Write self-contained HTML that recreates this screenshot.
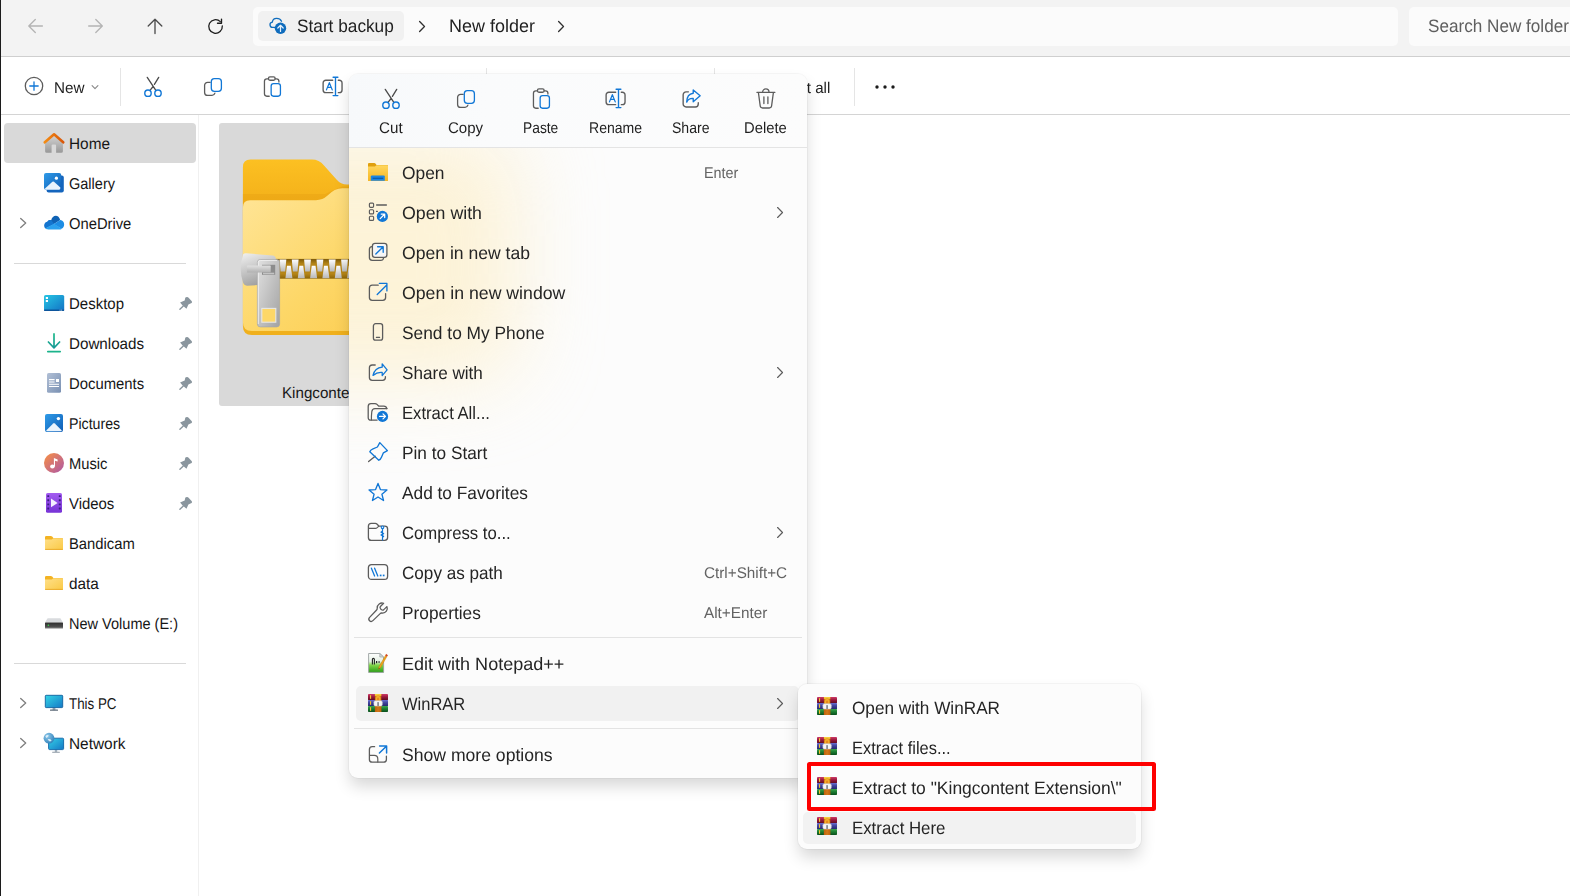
<!DOCTYPE html><html lang="en"><head><meta charset="utf-8"><title>File Explorer</title><style>
*{box-sizing:border-box;margin:0;padding:0}
html,body{width:1570px;height:896px;overflow:hidden;background:#fff}
body{font-family:"Liberation Sans",sans-serif;position:relative;text-rendering:geometricPrecision}
.abs,.t,svg{position:absolute}
.t{white-space:nowrap;line-height:1;transform-origin:0 50%;letter-spacing:0}
.layer{position:absolute;left:0;top:0;width:1570px;height:896px}
.gs{will-change:transform}
#topbar{left:0;top:0;width:1570px;height:56px;background:#f3f3f3}
#topline{left:0;top:56px;width:1570px;height:1px;background:#cfcfcf}
#toolbar{left:0;top:57px;width:1570px;height:57px;background:#fff}
#toolline{left:0;top:114px;width:1570px;height:1px;background:#d4d4d4}
#leftedge{left:0;top:0;width:1.25px;height:896px;background:#1c1c1c}
#addr{left:253px;top:6.5px;width:1145px;height:39.5px;background:#fbfbfb;border-radius:5px}
#chip{left:257.5px;top:10.5px;width:146.5px;height:30.5px;background:#f1f1f1;border-radius:5px}
#search{left:1409px;top:6.5px;width:200px;height:39.5px;background:#fbfbfb;border-radius:5px}
.vsep{width:1px;background:#e5e5e5}
#navline{left:198px;top:115px;width:1px;height:781px;background:#f0f0f0}
#homehl{left:4px;top:123px;width:192px;height:39.5px;background:#d9d9d9;border-radius:4px}
.hsep{height:1px;background:#d9d9d9}
#tile{left:219px;top:123px;width:214px;height:283px;background:#d9d9d9;border-radius:3px}
#menu{left:348.9px;top:74px;width:458.4px;height:704.3px;border-radius:9px;
  background:#fcfcfc;box-shadow:0 0 0 1px rgba(0,0,0,.035),0 9px 16px -1px rgba(0,0,0,.16)}
#menutop{left:0;top:0;width:460px;height:73px;background:linear-gradient(90deg,#f7f9fb 0%,#fafbfc 30%,#fcfcfc 100%)}
#menutopline{left:0;top:73px;width:460px;height:1px;background:#e4e4e4}
#tint{left:-140px;top:58px;width:308px;height:248px;background:#fdeab6;opacity:.52;filter:blur(42px);border-radius:40px}
.msep{height:1px;background:#e3e3e3;left:353.5px;width:448.5px}
#winrarhl{left:356px;top:686px;width:443px;height:34.5px;background:#f1f1f1;border-radius:5px}
#sub{left:798px;top:684px;width:343px;height:164.5px;border-radius:9px;background:#fcfcfc;
  box-shadow:0 0 0 1px rgba(0,0,0,.04),0 9px 16px -1px rgba(0,0,0,.16)}
#herehl{left:803px;top:811.5px;width:333.2px;height:32.2px;background:#f2f2f2;border-radius:5px}
#redbox{left:806.6px;top:762.1px;width:349px;height:49.1px;border:4.2px solid #fe0000;border-radius:2.5px}
</style></head><body>
<svg style="position:absolute;left:0;top:0" width="0" height="0"><defs><linearGradient id="wr1" x1="0" y1="0" x2="0" y2="1"><stop offset="0" stop-color="#cf3a68"/><stop offset=".45" stop-color="#9c1a3e"/><stop offset="1" stop-color="#5e0a20"/></linearGradient><linearGradient id="wr2" x1="0" y1="0" x2="0" y2="1"><stop offset="0" stop-color="#6a6fd2"/><stop offset=".45" stop-color="#40449c"/><stop offset="1" stop-color="#26286c"/></linearGradient><linearGradient id="wr3" x1="0" y1="0" x2="0" y2="1"><stop offset="0" stop-color="#3aa84e"/><stop offset=".45" stop-color="#1c7e32"/><stop offset="1" stop-color="#0a4e1c"/></linearGradient><linearGradient id="wrb" x1="0" y1="0" x2="1" y2="0"><stop offset="0" stop-color="#c8680c"/><stop offset=".5" stop-color="#f09a22"/><stop offset="1" stop-color="#c8680c"/></linearGradient><linearGradient id="fg" x1="0" y1="0" x2="1" y2="1"><stop offset="0" stop-color="#ffe08a"/><stop offset="1" stop-color="#fac945"/></linearGradient></defs></svg>
<div class="layer" id="L0">
<div id="topbar" class="abs"></div>
<div id="topline" class="abs"></div>
<div id="toolbar" class="abs"></div>
<div id="toolline" class="abs"></div>
<div id="addr" class="abs"></div>
<div id="chip" class="abs"></div>
<div id="search" class="abs"></div>
<div class="abs vsep" style="left:120px;top:68px;height:38px"></div>
<div class="abs vsep" style="left:486px;top:68px;height:38px"></div>
<div class="abs vsep" style="left:714px;top:68px;height:38px"></div>
<div class="abs vsep" style="left:854px;top:68px;height:38px"></div>
<div id="navline" class="abs"></div>
<div id="homehl" class="abs"></div>
<div class="abs hsep" style="left:14px;top:263px;width:172px"></div>
<div class="abs hsep" style="left:14px;top:663px;width:172px"></div>
<div id="tile" class="abs"></div>
<div id="leftedge" class="abs"></div>
<svg style="position:absolute;left:230px;top:150px" width="190" height="190" viewBox="0 0 190 190" fill="none" ><defs><linearGradient id="zb" x1="0" y1="0" x2="0" y2="1"><stop offset="0" stop-color="#fcc022"/><stop offset="1" stop-color="#f0aa16"/></linearGradient><linearGradient id="zf" x1="0" y1="0" x2="1" y2="1"><stop offset="0" stop-color="#ffe598"/><stop offset=".55" stop-color="#fdd768"/><stop offset="1" stop-color="#fccb4c"/></linearGradient><linearGradient id="zt" x1="0" y1="0" x2="0" y2="1"><stop offset="0" stop-color="#ffffff"/><stop offset="1" stop-color="#b8b8b8"/></linearGradient><linearGradient id="zk" x1="0" y1="0" x2="0" y2="1"><stop offset="0" stop-color="#7d5a08"/><stop offset=".25" stop-color="#b58517"/><stop offset=".75" stop-color="#b58517"/><stop offset="1" stop-color="#8a6409"/></linearGradient><linearGradient id="zs" x1="0.2" y1="0" x2="0.6" y2="1"><stop offset="0" stop-color="#ececec"/><stop offset="1" stop-color="#9a9a9a"/></linearGradient><linearGradient id="zp" x1="0" y1="0" x2="1" y2="1"><stop offset="0" stop-color="#e2e2e2"/><stop offset=".5" stop-color="#c2c2c2"/><stop offset="1" stop-color="#a2a2a2"/></linearGradient><linearGradient id="zbar" x1="0" y1="0" x2="0" y2="1"><stop offset="0" stop-color="#e0e0e0"/><stop offset="1" stop-color="#b0b0b0"/></linearGradient></defs><path d="M12.9 17.2 Q12.9 9.6 20.4 9.6 H82 Q89 9.6 94 15.4 L106.5 29.6 Q110.8 34.6 117 34.6 H182 V70 H12.9 Z" fill="url(#zb)"/><path d="M12.9 44 H95 L112 36.5 H182 V60 H12.9 Z" fill="#e9a414" opacity=".55"/><path d="M12.9 60 H182 V185 H21.9 Q12.9 185 12.9 176 Z" fill="#f0b01c"/><path d="M12.9 57.4 Q12.9 50.2 20.2 50.2 H86 Q92.6 50.2 97.6 45.6 Q104.4 38.2 112.4 38.2 H182 V181 H21.9 Q12.9 181 12.9 172 Z" fill="url(#zf)"/><rect x="40" y="108.9" width="142" height="19.8" fill="url(#zk)"/><path d="M49.5 109.4 H56.3 L55.2 121.6 H50.6 Z" fill="url(#zt)"/><path d="M61.8 109.4 H68.6 L67.5 121.6 H62.9 Z" fill="url(#zt)"/><path d="M74.1 109.4 H80.9 L79.8 121.6 H75.2 Z" fill="url(#zt)"/><path d="M86.5 109.4 H93.3 L92.2 121.6 H87.6 Z" fill="url(#zt)"/><path d="M98.8 109.4 H105.6 L104.5 121.6 H99.9 Z" fill="url(#zt)"/><path d="M111.1 109.4 H117.9 L116.8 121.6 H112.2 Z" fill="url(#zt)"/><path d="M123.4 109.4 H130.2 L129.1 121.6 H124.5 Z" fill="url(#zt)"/><path d="M135.7 109.4 H142.5 L141.4 121.6 H136.8 Z" fill="url(#zt)"/><path d="M148.0 109.4 H154.8 L153.7 121.6 H149.1 Z" fill="url(#zt)"/><path d="M160.3 109.4 H167.1 L166.0 121.6 H161.4 Z" fill="url(#zt)"/><path d="M57.0 115.8 H60.8 L62.4 128.2 H55.4 Z" fill="url(#zt)"/><path d="M69.4 115.8 H73.2 L74.8 128.2 H67.8 Z" fill="url(#zt)"/><path d="M81.7 115.8 H85.5 L87.1 128.2 H80.1 Z" fill="url(#zt)"/><path d="M94.0 115.8 H97.8 L99.4 128.2 H92.4 Z" fill="url(#zt)"/><path d="M106.4 115.8 H110.2 L111.8 128.2 H104.8 Z" fill="url(#zt)"/><path d="M118.7 115.8 H122.5 L124.1 128.2 H117.1 Z" fill="url(#zt)"/><path d="M131.0 115.8 H134.8 L136.4 128.2 H129.4 Z" fill="url(#zt)"/><path d="M143.3 115.8 H147.1 L148.7 128.2 H141.7 Z" fill="url(#zt)"/><path d="M155.6 115.8 H159.4 L161.0 128.2 H154.0 Z" fill="url(#zt)"/><path d="M167.9 115.8 H171.7 L173.3 128.2 H166.3 Z" fill="url(#zt)"/><path d="M13.2 104.2 Q14 103.2 16 103.3 L42.6 105.4 Q45.6 105.8 45.8 108.6 V131 Q45.8 133.6 42.6 133.9 L17.2 135.8 Q14.4 135.9 13.2 133 Q8.2 119 13.2 104.2 Z" fill="url(#zs)"/><rect x="27.4" y="109.5" width="22.2" height="67.4" rx="2.8" fill="url(#zp)" stroke="#a6a6a6" stroke-width=".7"/><path d="M28.3 174 V112.4 Q28.3 110.4 30.4 110.4 H47" stroke="#f2f2f2" stroke-width="1" fill="none" opacity=".85"/><rect x="31.8" y="158.4" width="14" height="13.8" fill="#fdd768" stroke="#e6e6e6" stroke-width="1.1"/><rect x="32" y="114.8" width="13.2" height="10" fill="#8c8c8c"/><rect x="33" y="122.7" width="11.2" height="1.6" fill="#c4c4c4"/><rect x="16.9" y="115.6" width="23.8" height="7" rx=".6" fill="url(#zbar)"/></svg>
<svg style="position:absolute;left:26.299999999999997px;top:17px" width="18" height="18" viewBox="0 0 18 18" fill="none" ><path d="M16.4 9 H2.9 M9.3 2.5 L2.8 9 L9.3 15.5" stroke="#b4b4b4" stroke-width="1.35" stroke-linecap="round" stroke-linejoin="round"/></svg>
<svg style="position:absolute;left:86.5px;top:17px" width="18" height="18" viewBox="0 0 18 18" fill="none" ><path d="M1.7 9 H15.2 M8.8 2.5 L15.3 9 L8.8 15.5" stroke="#b4b4b4" stroke-width="1.35" stroke-linecap="round" stroke-linejoin="round"/></svg>
<svg style="position:absolute;left:146px;top:17.2px" width="18" height="18" viewBox="0 0 18 18" fill="none" ><path d="M9 16.6 V2.2 M2.2 9 L9 2.2 L15.8 9" stroke="#4d4d4d" stroke-width="1.35" stroke-linecap="round" stroke-linejoin="round"/></svg>
<svg style="position:absolute;left:203.0px;top:14.0px" width="25" height="25" viewBox="0 0 25 25" fill="none" ><path d="M19.3 11.9 A6.8 6.8 0 1 1 17.3 7.65" stroke="#1c1c1c" stroke-width="1.3" stroke-linecap="round"/><path d="M18.5 5.1 V9.25 H14.5" stroke="#1c1c1c" stroke-width="1.35" stroke-linecap="round" stroke-linejoin="round"/></svg>
<svg style="position:absolute;left:267.6px;top:15.3px" width="20" height="20" viewBox="0 0 20 20" fill="none" ><path d="M11.9 10.2 H9.2 C6.2 10.3 5.2 5.6 8.8 4.9 C9.6 -0.2 16.2 0.4 18 4.0" stroke="#0f6cbd" stroke-width="1.3" stroke-linecap="round" transform="translate(-4.5,2.2)"/><circle cx="12.5" cy="13.2" r="5.7" fill="#0f6cbd"/><path d="M12.5 16.4 V10.6 M9.8 13.0 L12.5 10.3 L15.2 13.0" stroke="#e6f0fa" stroke-width="1.25" stroke-linecap="round" stroke-linejoin="round"/></svg>
<svg style="position:absolute;left:415.7px;top:18.4px" width="12" height="17" viewBox="0 0 12 17" fill="none" ><path d="M3.6 3.5 L8.5 8.5 L3.6 13.5" stroke="#303030" stroke-width="1.3" stroke-linecap="round" stroke-linejoin="round"/></svg>
<svg style="position:absolute;left:554.7px;top:18.4px" width="12" height="17" viewBox="0 0 12 17" fill="none" ><path d="M3.6 3.5 L8.5 8.5 L3.6 13.5" stroke="#303030" stroke-width="1.3" stroke-linecap="round" stroke-linejoin="round"/></svg>
<svg style="position:absolute;left:22.5px;top:75.4px" width="22" height="22" viewBox="0 0 22 22" fill="none" ><circle cx="11" cy="11" r="8.7" stroke="#5c5c5c" stroke-width="1.3"/><path d="M11 6.8 V15.2 M6.8 11 H15.2" stroke="#1177d6" stroke-width="1.3" stroke-linecap="round"/></svg>
<svg style="position:absolute;left:89px;top:81.3px" width="12" height="12" viewBox="0 0 12 12" fill="none" ><path d="M3.1 4.7 L6 7.6 L8.9 4.7" stroke="#8a8a8a" stroke-width="1.15" stroke-linecap="round" stroke-linejoin="round"/></svg>
<svg style="position:absolute;left:140.4px;top:73px" width="26" height="26" viewBox="0 0 26 26" fill="none" ><path d="M7.25 4.35 L15.67 17.1 M18.7 4.35 L14.4 11.4 M13.1 13.5 L10.2 17.1" stroke="#4a4a4a" stroke-width="1.3" stroke-linecap="round"/><circle cx="7.98" cy="20.17" r="3.2" stroke="#1177d6" stroke-width="1.4"/><circle cx="17.99" cy="20.17" r="3.2" stroke="#1177d6" stroke-width="1.4"/></svg>
<svg style="position:absolute;left:202px;top:76px" width="22" height="22" viewBox="0 0 22 22" fill="none" ><path d="M8.2 6.3 H5.6 A3 3 0 0 0 2.6 9.3 V16.4 A3 3 0 0 0 5.6 19.4 H10 A3 3 0 0 0 12.9 17.2" stroke="#5c5c5c" stroke-width="1.3" stroke-linecap="round"/><rect x="9.3" y="2.7" width="10.1" height="12.6" rx="3" stroke="#1177d6" stroke-width="1.3"/></svg>
<svg style="position:absolute;left:261.21px;top:74.34px" width="22.68" height="25.92" viewBox="0 0 21 24" fill="none"><path d="M7 4.5 H5.4 A2.2 2.2 0 0 0 3.2 6.7 V18.4 A2.2 2.2 0 0 0 5.4 20.6 H7.6 M13 4.5 H14.4 A2.2 2.2 0 0 1 16.6 6.7 V7.4" stroke="#5c5c5c" stroke-width="1.20" stroke-linecap="round"/><rect x="6.9" y="2.6" width="6.2" height="3.2" rx="1.4" stroke="#5c5c5c" stroke-width="1.20"/><rect x="9.4" y="9" width="8.6" height="11.6" rx="2.2" stroke="#1177d6" stroke-width="1.20"/></svg>
<svg style="position:absolute;left:320.02px;top:75.46px" width="24.96" height="22.88" viewBox="0 0 24 22" fill="none"><path d="M12.2 5 H5.6 A2.6 2.6 0 0 0 3 7.6 V14.4 A2.6 2.6 0 0 0 5.6 17 H12.2 M17.6 5 H18.6 A2.6 2.6 0 0 1 21.2 7.6 V14.4 A2.6 2.6 0 0 1 18.6 17 H17.6" stroke="#5c5c5c" stroke-width="1.3" stroke-linecap="round"/><path d="M12.6 2.2 H17.2 M12.6 19.8 H17.2 M14.9 2.2 V19.8" stroke="#1177d6" stroke-width="1.3" stroke-linecap="round"/><path d="M6.2 14.3 L9 7.4 L11.8 14.3 M7.2 12 H10.8" stroke="#1177d6" stroke-width="1.2" stroke-linecap="round" stroke-linejoin="round"/></svg>
<svg style="position:absolute;left:382.75px;top:75.45px" width="23.10" height="23.10" viewBox="0 0 22 22" fill="none"><path d="M8 4.6 H5.8 A2.8 2.8 0 0 0 3 7.4 V16.2 A2.8 2.8 0 0 0 5.8 19 H14.6 A2.8 2.8 0 0 0 17.4 16.2 V15" stroke="#5c5c5c" stroke-width="1.3" stroke-linecap="round"/><path d="M12.6 2.8 L19.2 8.4 L12.6 14 V10.9 C9.6 10.7 7.6 11.9 6.4 14.4 C6.5 9.4 9 6.4 12.6 6 Z" stroke="#1177d6" stroke-width="1.3" stroke-linejoin="round"/></svg>
<svg style="position:absolute;left:443px;top:75px" width="22" height="24" viewBox="0 0 22 24" fill="none" ><path d="M1.9 5.3 H19.9 M7.6 5.1 A3.2 3.2 0 0 1 14 5.1 M3.4 5.5 L5.2 18.8 A2.4 2.4 0 0 0 7.6 21 H14.2 A2.4 2.4 0 0 0 16.6 18.8 L18.4 5.5 M8.9 9.8 V16.5 M12.9 9.8 V16.5" stroke="#5c5c5c" stroke-width="1.3" stroke-linecap="round" stroke-linejoin="round"/></svg>
<svg style="position:absolute;left:874px;top:84px" width="22" height="6" viewBox="0 0 22 6" fill="none" ><circle cx="3" cy="3" r="1.7" fill="#1b1b1b"/><circle cx="11" cy="3" r="1.7" fill="#1b1b1b"/><circle cx="19" cy="3" r="1.7" fill="#1b1b1b"/></svg>
<svg style="position:absolute;left:43px;top:132px" width="22" height="22" viewBox="0 0 22 22" fill="none" ><defs><linearGradient id="hg" x1="0" y1="0" x2="0" y2="1"><stop offset="0" stop-color="#d6d6d6"/><stop offset="1" stop-color="#989898"/></linearGradient><linearGradient id="hr" x1="0" y1="0" x2="1" y2="0"><stop offset="0" stop-color="#f48c14"/><stop offset="1" stop-color="#d9570a"/></linearGradient></defs><path d="M2.1 9.6 L11 2.6 L19.9 9.6 V19.2 Q19.9 20.8 18.3 20.8 H13.1 V13.4 Q13.1 12.4 12.1 12.4 H9.6 Q8.6 12.4 8.6 13.4 V20.8 H3.7 Q2.1 20.8 2.1 19.2 Z" fill="url(#hg)"/><path d="M1.8 10.3 L11.05 2.3 L20.2 10.3" stroke="url(#hr)" stroke-width="2.6" stroke-linecap="round" stroke-linejoin="round"/></svg>
<svg style="position:absolute;left:43px;top:172px" width="22" height="22" viewBox="0 0 22 22" fill="none" ><defs><linearGradient id="gg" x1="0" y1="0" x2="1" y2="1"><stop offset="0" stop-color="#2f9be8"/><stop offset="1" stop-color="#0f5db5"/></linearGradient></defs><rect x="3.6" y="3.6" width="17.2" height="17" rx="2" fill="#1465bd"/><rect x="1" y="1" width="17.2" height="16.8" rx="2" fill="url(#gg)"/><path d="M2 16.6 L9.4 9.8 Q10.2 9.2 11 9.8 L17.4 15.6 Q17.6 17.8 16 17.8 H3.2 Q2 17.8 2 16.6 Z" fill="#e8f3fd"/><circle cx="13.4" cy="6.2" r="1.6" fill="#fff"/></svg>
<svg style="position:absolute;left:43px;top:214.6px" width="22" height="17" viewBox="0 0 22 17" fill="none" ><g transform="translate(0,-1.2) scale(1,1.1)"><path d="M8.2 5.8 C9.4 0.6 15.8 0.2 17.2 5.6 L10.6 9.6 L4.4 7.4 C5 6.2 6.6 5.4 8.2 5.8 Z" fill="#0f62b4"/><path d="M4.4 7.2 C1.2 7.4 0 11.4 2.6 13.4 L11.4 9.2 L8.2 5.8 C6.6 5.3 5 6.0 4.4 7.2 Z" fill="#1475cf"/><path d="M17.2 5.6 C21.4 5.4 22.8 11.6 18.6 13.6 L10.6 9.4 Z" fill="#1e8de4"/><path d="M2.4 13.2 C3.2 14 4.2 14.2 5.2 14.2 H17.4 C17.9 14.2 18.4 14 18.8 13.6 L11 9 Z" fill="#2aa0ee"/></g></svg>
<svg style="position:absolute;left:43px;top:294px" width="22" height="18" viewBox="0 0 22 18" fill="none" ><defs><linearGradient id="dg" x1="0" y1="0" x2="1" y2="1"><stop offset="0" stop-color="#27c6e4"/><stop offset="1" stop-color="#1272c4"/></linearGradient></defs><rect x="1" y="1" width="20.2" height="15.9" rx="1.6" fill="url(#dg)"/><rect x="1" y="15.6" width="20.2" height="1.3" rx=".6" fill="#0d559c"/><rect x="2.8" y="3" width="2.2" height="2" fill="#fff"/><rect x="2.8" y="6" width="2.2" height="2" fill="#fff"/><rect x="16.6" y="15.7" width=".9" height=".9" fill="#cfe6f7"/><rect x="18.2" y="15.7" width=".9" height=".9" fill="#cfe6f7"/></svg>
<svg style="position:absolute;left:46px;top:332px" width="16" height="22" viewBox="0 0 16 22" fill="none" ><defs><linearGradient id="dlg" x1="0" y1="0" x2="0" y2="1"><stop offset="0" stop-color="#1cb88a"/><stop offset="1" stop-color="#179a96"/></linearGradient></defs><path d="M8 1.9 V15.4 M2.4 10 L8 15.8 L13.6 10" stroke="url(#dlg)" stroke-width="1.7" stroke-linecap="round" stroke-linejoin="round"/><path d="M1.8 19.6 H14.2" stroke="#1bb38b" stroke-width="1.7" stroke-linecap="round"/></svg>
<svg style="position:absolute;left:46px;top:372px" width="16" height="22" viewBox="0 0 16 22" fill="none" ><defs><linearGradient id="dcg" x1="0" y1="0" x2="1" y2="1"><stop offset="0" stop-color="#b2c0d6"/><stop offset="1" stop-color="#7990b2"/></linearGradient></defs><rect x="1" y="1" width="14" height="19.8" rx="1.6" fill="url(#dcg)"/><rect x="10" y="7" width="3" height="3" fill="#fff"/><path d="M3 7.6 H8.6 M3 9.9 H8.6 M3 12.2 H13 M3 14.5 H13" stroke="#fff" stroke-width="1.05"/></svg>
<svg style="position:absolute;left:43.9px;top:413px" width="20" height="20" viewBox="0 0 20 20" fill="none" ><defs><linearGradient id="pg" x1="0" y1="0" x2="1" y2="1"><stop offset="0" stop-color="#2f9be8"/><stop offset="1" stop-color="#0f5db5"/></linearGradient></defs><rect x="1" y="1" width="18" height="18" rx="2" fill="url(#pg)"/><path d="M2.2 17.4 L9.2 10.4 Q10 9.7 10.8 10.4 L17.8 17.4 Q17.6 18.2 16.6 18.2 H3.4 Q2.4 18.2 2.2 17.4 Z" fill="#eaf4fd"/><circle cx="14.4" cy="5.6" r="1.7" fill="#fff"/></svg>
<svg style="position:absolute;left:43px;top:452px" width="22" height="22" viewBox="0 0 22 22" fill="none" ><defs><linearGradient id="mg" x1="0.1" y1="0.1" x2="0.9" y2="0.9"><stop offset="0" stop-color="#f18b4c"/><stop offset="1" stop-color="#b45c9e"/></linearGradient></defs><circle cx="11" cy="11" r="10" fill="url(#mg)"/><ellipse cx="9.4" cy="14.6" rx="2.3" ry="2" fill="#fff"/><path d="M10.9 14.6 V6 L14.6 7.4 V9.6 L12 8.7 V14.6 Z" fill="#fff"/></svg>
<svg style="position:absolute;left:45px;top:492px" width="18" height="22" viewBox="0 0 18 22" fill="none" ><defs><linearGradient id="vg" x1="0" y1="0" x2="0" y2="1"><stop offset="0" stop-color="#a35cf0"/><stop offset="1" stop-color="#7632d6"/></linearGradient></defs><rect x="1" y="1" width="16" height="19.8" rx="1.6" fill="url(#vg)"/><rect x="2.3" y="3.2" width="1.9" height="1.9" rx=".3" fill="#3c1d80"/><rect x="13.8" y="3.2" width="1.9" height="1.9" rx=".3" fill="#3c1d80"/><rect x="2.3" y="7.3" width="1.9" height="1.9" rx=".3" fill="#3c1d80"/><rect x="13.8" y="7.3" width="1.9" height="1.9" rx=".3" fill="#3c1d80"/><rect x="2.3" y="11.4" width="1.9" height="1.9" rx=".3" fill="#3c1d80"/><rect x="13.8" y="11.4" width="1.9" height="1.9" rx=".3" fill="#3c1d80"/><rect x="2.3" y="15.5" width="1.9" height="1.9" rx=".3" fill="#3c1d80"/><rect x="13.8" y="15.5" width="1.9" height="1.9" rx=".3" fill="#3c1d80"/><path d="M6 6.6 L12.6 10.9 L6 15.2 Z" fill="#f4efff"/></svg>
<svg style="position:absolute;left:43.9px;top:535px" width="20" height="16" viewBox="0 0 20 16" fill="none" ><path d="M1 2.2 Q1 1 2.2 1 H6.8 Q7.6 1 8.2 1.6 L9.4 3 H17.8 Q19 3 19 4.2 V13.8 Q19 15 17.8 15 H2.2 Q1 15 1 13.8 Z" fill="#f3b323"/><path d="M1 4.6 H7 Q7.8 4.6 8.4 4.1 L9.4 3.2 H17.8 Q19 3.2 19 4.4 V13.8 Q19 15 17.8 15 H2.2 Q1 15 1 13.8 Z" fill="url(#fg)"/><path d="M1.3 14.4 H18.7" stroke="#eaa828" stroke-width=".9"/></svg>
<svg style="position:absolute;left:43.9px;top:575px" width="20" height="16" viewBox="0 0 20 16" fill="none" ><path d="M1 2.2 Q1 1 2.2 1 H6.8 Q7.6 1 8.2 1.6 L9.4 3 H17.8 Q19 3 19 4.2 V13.8 Q19 15 17.8 15 H2.2 Q1 15 1 13.8 Z" fill="#f3b323"/><path d="M1 4.6 H7 Q7.8 4.6 8.4 4.1 L9.4 3.2 H17.8 Q19 3.2 19 4.4 V13.8 Q19 15 17.8 15 H2.2 Q1 15 1 13.8 Z" fill="url(#fg)"/><path d="M1.3 14.4 H18.7" stroke="#eaa828" stroke-width=".9"/></svg>
<svg style="position:absolute;left:43.9px;top:616.6px" width="20" height="13" viewBox="0 0 20 13" fill="none" ><defs><linearGradient id="drg" x1="0" y1="0" x2="0" y2="1"><stop offset="0" stop-color="#2e2e2e"/><stop offset="1" stop-color="#5a5a5a"/></linearGradient></defs><path d="M3.6 1.2 H16.4 L19 5.6 H1 Z" fill="#d9dbde"/><rect x="1" y="5.4" width="18" height="5.9" rx=".6" fill="url(#drg)"/><rect x="1" y="10.7" width="18" height=".7" fill="#9a9a9a"/><circle cx="4.4" cy="8.3" r=".75" fill="#36e04a"/></svg>
<svg style="position:absolute;left:44px;top:694px" width="20" height="18" viewBox="0 0 20 18" fill="none" ><defs><linearGradient id="tg" x1="0" y1="0" x2="1" y2="1"><stop offset="0" stop-color="#35d6e6"/><stop offset="1" stop-color="#1478c6"/></linearGradient></defs><rect x="8.6" y="13.2" width="2.8" height="3" fill="#9aa6b2"/><rect x="6" y="15.6" width="8" height="1.1" rx=".3" fill="#5d6b78"/><rect x="1.3" y="1.3" width="17.4" height="12.3" rx=".8" fill="url(#tg)" stroke="#0e5f9e" stroke-width=".9"/></svg>
<svg style="position:absolute;left:42.1px;top:732.2px" width="23" height="22" viewBox="0 0 23 22" fill="none" ><defs><linearGradient id="ng" x1="0" y1="0" x2="1" y2="1"><stop offset="0" stop-color="#35d0e6"/><stop offset="1" stop-color="#1478c6"/></linearGradient><radialGradient id="gl" cx="0.35" cy="0.3" r="0.8"><stop offset="0" stop-color="#8fc9ea"/><stop offset="1" stop-color="#2b7db8"/></radialGradient></defs><rect x="12.8" y="17.4" width="2.4" height="2.6" fill="#a8b3be"/><rect x="10.2" y="19.8" width="7.6" height="1" rx=".3" fill="#8d99a5"/><rect x="6.6" y="6.2" width="15" height="11.4" rx="1" fill="url(#ng)" stroke="#0e64a6" stroke-width=".9"/><circle cx="7" cy="6.2" r="5.4" fill="url(#gl)"/><path d="M3.4 4.2 Q5 2.4 6.8 3.6 Q6 5.2 4.4 6.0 Z M5.6 7.2 Q8 6.4 9.6 8.4 Q8.6 9.6 7.2 9.2 Z" fill="#e4f2fa" opacity=".9"/></svg>
<svg style="position:absolute;left:17.3px;top:215px" width="12" height="16" viewBox="0 0 12 16" fill="none" ><path d="M3.7 3.5 L8.7 8 L3.7 12.5" stroke="#808080" stroke-width="1.35" stroke-linecap="round" stroke-linejoin="round"/></svg>
<svg style="position:absolute;left:17.3px;top:695px" width="12" height="16" viewBox="0 0 12 16" fill="none" ><path d="M3.7 3.5 L8.7 8 L3.7 12.5" stroke="#808080" stroke-width="1.35" stroke-linecap="round" stroke-linejoin="round"/></svg>
<svg style="position:absolute;left:17.3px;top:735px" width="12" height="16" viewBox="0 0 12 16" fill="none" ><path d="M3.7 3.5 L8.7 8 L3.7 12.5" stroke="#808080" stroke-width="1.35" stroke-linecap="round" stroke-linejoin="round"/></svg>
<svg style="position:absolute;left:170px;top:288px" width="30" height="30" viewBox="0 0 30 30" fill="none" ><path d="M15.2 10.1 Q15.4 9 17.1 8.95 Q18 9 18.6 9.8 L21.8 13.2 Q22.4 14.3 21.6 14.9 L18.4 16.4 L16.5 20.7 L12.6 17.4 L10.1 14.5 L14.7 12.4 Z" fill="#8a969e"/><path d="M13.3 18.0 L9.9 21.3" stroke="#8a969e" stroke-width="1.35" stroke-linecap="round"/></svg>
<svg style="position:absolute;left:170px;top:328px" width="30" height="30" viewBox="0 0 30 30" fill="none" ><path d="M15.2 10.1 Q15.4 9 17.1 8.95 Q18 9 18.6 9.8 L21.8 13.2 Q22.4 14.3 21.6 14.9 L18.4 16.4 L16.5 20.7 L12.6 17.4 L10.1 14.5 L14.7 12.4 Z" fill="#8a969e"/><path d="M13.3 18.0 L9.9 21.3" stroke="#8a969e" stroke-width="1.35" stroke-linecap="round"/></svg>
<svg style="position:absolute;left:170px;top:368px" width="30" height="30" viewBox="0 0 30 30" fill="none" ><path d="M15.2 10.1 Q15.4 9 17.1 8.95 Q18 9 18.6 9.8 L21.8 13.2 Q22.4 14.3 21.6 14.9 L18.4 16.4 L16.5 20.7 L12.6 17.4 L10.1 14.5 L14.7 12.4 Z" fill="#8a969e"/><path d="M13.3 18.0 L9.9 21.3" stroke="#8a969e" stroke-width="1.35" stroke-linecap="round"/></svg>
<svg style="position:absolute;left:170px;top:408px" width="30" height="30" viewBox="0 0 30 30" fill="none" ><path d="M15.2 10.1 Q15.4 9 17.1 8.95 Q18 9 18.6 9.8 L21.8 13.2 Q22.4 14.3 21.6 14.9 L18.4 16.4 L16.5 20.7 L12.6 17.4 L10.1 14.5 L14.7 12.4 Z" fill="#8a969e"/><path d="M13.3 18.0 L9.9 21.3" stroke="#8a969e" stroke-width="1.35" stroke-linecap="round"/></svg>
<svg style="position:absolute;left:170px;top:448px" width="30" height="30" viewBox="0 0 30 30" fill="none" ><path d="M15.2 10.1 Q15.4 9 17.1 8.95 Q18 9 18.6 9.8 L21.8 13.2 Q22.4 14.3 21.6 14.9 L18.4 16.4 L16.5 20.7 L12.6 17.4 L10.1 14.5 L14.7 12.4 Z" fill="#8a969e"/><path d="M13.3 18.0 L9.9 21.3" stroke="#8a969e" stroke-width="1.35" stroke-linecap="round"/></svg>
<svg style="position:absolute;left:170px;top:488px" width="30" height="30" viewBox="0 0 30 30" fill="none" ><path d="M15.2 10.1 Q15.4 9 17.1 8.95 Q18 9 18.6 9.8 L21.8 13.2 Q22.4 14.3 21.6 14.9 L18.4 16.4 L16.5 20.7 L12.6 17.4 L10.1 14.5 L14.7 12.4 Z" fill="#8a969e"/><path d="M13.3 18.0 L9.9 21.3" stroke="#8a969e" stroke-width="1.35" stroke-linecap="round"/></svg>
<span class="t" id="t5" style="left:69.1px;top:137.0px;font-size:15.7px;color:#161616;transform:scaleX(0.9795)">Home</span>
<span class="t" id="t6" style="left:69.1px;top:177.0px;font-size:15.7px;color:#161616;transform:scaleX(0.9255)">Gallery</span>
<span class="t" id="t7" style="left:69.1px;top:217.0px;font-size:15.7px;color:#161616;transform:scaleX(0.9402)">OneDrive</span>
<span class="t" id="t8" style="left:69.1px;top:297.0px;font-size:15.7px;color:#161616;transform:scaleX(0.9555)">Desktop</span>
<span class="t" id="t9" style="left:69.1px;top:337.0px;font-size:15.7px;color:#161616;transform:scaleX(0.9675)">Downloads</span>
<span class="t" id="t10" style="left:69.1px;top:377.0px;font-size:15.7px;color:#161616;transform:scaleX(0.9465)">Documents</span>
<span class="t" id="t11" style="left:69.1px;top:417.0px;font-size:15.7px;color:#161616;transform:scaleX(0.9034)">Pictures</span>
<span class="t" id="t12" style="left:69.1px;top:457.0px;font-size:15.7px;color:#161616;transform:scaleX(0.9397)">Music</span>
<span class="t" id="t13" style="left:69.1px;top:497.0px;font-size:15.7px;color:#161616;transform:scaleX(0.9499)">Videos</span>
<span class="t" id="t14" style="left:69.1px;top:537.0px;font-size:15.7px;color:#161616;transform:scaleX(0.9432)">Bandicam</span>
<span class="t" id="t15" style="left:69.1px;top:577.0px;font-size:15.7px;color:#161616;transform:scaleX(0.9755)">data</span>
<span class="t" id="t16" style="left:69.1px;top:617.0px;font-size:15.7px;color:#161616;transform:scaleX(0.9261)">New Volume (E:)</span>
<span class="t" id="t17" style="left:69.1px;top:697.0px;font-size:15.7px;color:#161616;transform:scaleX(0.8513)">This PC</span>
<span class="t" id="t18" style="left:69.1px;top:737.0px;font-size:15.7px;color:#161616;transform:scaleX(0.9818)">Network</span>
<span class="t" id="t19" style="left:282.1px;top:386.0px;font-size:15.5px;color:#161616;transform:scaleX(0.9775)">Kingcontent Extension</span>
</div>
<div class="layer gs" id="L0t">
<span class="t" id="t0" style="left:297.0px;top:17.0px;font-size:18.0px;color:#1f1f1f;transform:scaleX(0.9578)">Start backup</span>
<span class="t" id="t1" style="left:449.0px;top:17.0px;font-size:18.0px;color:#1f1f1f;transform:scaleX(0.9983)">New folder</span>
<span class="t" id="t2" style="left:1427.7px;top:17.0px;font-size:18.0px;color:#5f5f5f;transform:scaleX(0.9515)">Search New folder</span>
<span class="t" id="t3" style="left:54.1px;top:81.0px;font-size:15.5px;color:#1f1f1f;transform:scaleX(0.9834)">New</span>
<span class="t" id="t4" style="left:768.9px;top:81.0px;font-size:15.5px;color:#1f1f1f;transform:scaleX(0.9741)">Select all</span>
</div>
<div class="abs" id="menu"><div class="abs" style="left:0;top:0;width:458.4px;height:704.3px;border-radius:9px;overflow:hidden"><div id="tint" class="abs"></div><div id="menutop" class="abs"></div><div id="menutopline" class="abs"></div></div></div>
<div class="layer gs" id="L1">
<div class="abs msep" style="top:637px"></div>
<div class="abs msep" style="top:728px"></div>
<div id="winrarhl" class="abs"></div>
<svg style="position:absolute;left:378px;top:85px" width="26" height="26" viewBox="0 0 26 26" fill="none" ><path d="M7.25 4.35 L15.67 17.1 M18.7 4.35 L14.4 11.4 M13.1 13.5 L10.2 17.1" stroke="#4a4a4a" stroke-width="1.3" stroke-linecap="round"/><circle cx="7.98" cy="20.17" r="3.2" stroke="#1177d6" stroke-width="1.4"/><circle cx="17.99" cy="20.17" r="3.2" stroke="#1177d6" stroke-width="1.4"/></svg>
<svg style="position:absolute;left:455px;top:88px" width="22" height="22" viewBox="0 0 22 22" fill="none" ><path d="M8.2 6.3 H5.6 A3 3 0 0 0 2.6 9.3 V16.4 A3 3 0 0 0 5.6 19.4 H10 A3 3 0 0 0 12.9 17.2" stroke="#5c5c5c" stroke-width="1.3" stroke-linecap="round"/><rect x="9.3" y="2.7" width="10.1" height="12.6" rx="3" stroke="#1177d6" stroke-width="1.3"/></svg>
<svg style="position:absolute;left:529.51px;top:86.34px" width="22.68" height="25.92" viewBox="0 0 21 24" fill="none"><path d="M7 4.5 H5.4 A2.2 2.2 0 0 0 3.2 6.7 V18.4 A2.2 2.2 0 0 0 5.4 20.6 H7.6 M13 4.5 H14.4 A2.2 2.2 0 0 1 16.6 6.7 V7.4" stroke="#5c5c5c" stroke-width="1.20" stroke-linecap="round"/><rect x="6.9" y="2.6" width="6.2" height="3.2" rx="1.4" stroke="#5c5c5c" stroke-width="1.20"/><rect x="9.4" y="9" width="8.6" height="11.6" rx="2.2" stroke="#1177d6" stroke-width="1.20"/></svg>
<svg style="position:absolute;left:603.42px;top:87.46px" width="24.96" height="22.88" viewBox="0 0 24 22" fill="none"><path d="M12.2 5 H5.6 A2.6 2.6 0 0 0 3 7.6 V14.4 A2.6 2.6 0 0 0 5.6 17 H12.2 M17.6 5 H18.6 A2.6 2.6 0 0 1 21.2 7.6 V14.4 A2.6 2.6 0 0 1 18.6 17 H17.6" stroke="#5c5c5c" stroke-width="1.3" stroke-linecap="round"/><path d="M12.6 2.2 H17.2 M12.6 19.8 H17.2 M14.9 2.2 V19.8" stroke="#1177d6" stroke-width="1.3" stroke-linecap="round"/><path d="M6.2 14.3 L9 7.4 L11.8 14.3 M7.2 12 H10.8" stroke="#1177d6" stroke-width="1.2" stroke-linecap="round" stroke-linejoin="round"/></svg>
<svg style="position:absolute;left:679.75px;top:87.45px" width="23.10" height="23.10" viewBox="0 0 22 22" fill="none"><path d="M8 4.6 H5.8 A2.8 2.8 0 0 0 3 7.4 V16.2 A2.8 2.8 0 0 0 5.8 19 H14.6 A2.8 2.8 0 0 0 17.4 16.2 V15" stroke="#5c5c5c" stroke-width="1.3" stroke-linecap="round"/><path d="M12.6 2.8 L19.2 8.4 L12.6 14 V10.9 C9.6 10.7 7.6 11.9 6.4 14.4 C6.5 9.4 9 6.4 12.6 6 Z" stroke="#1177d6" stroke-width="1.3" stroke-linejoin="round"/></svg>
<svg style="position:absolute;left:755px;top:87px" width="22" height="24" viewBox="0 0 22 24" fill="none" ><path d="M1.9 5.3 H19.9 M7.6 5.1 A3.2 3.2 0 0 1 14 5.1 M3.4 5.5 L5.2 18.8 A2.4 2.4 0 0 0 7.6 21 H14.2 A2.4 2.4 0 0 0 16.6 18.8 L18.4 5.5 M8.9 9.8 V16.5 M12.9 9.8 V16.5" stroke="#5c5c5c" stroke-width="1.3" stroke-linecap="round" stroke-linejoin="round"/></svg>
<svg style="position:absolute;left:773.5px;top:204px" width="12" height="17" viewBox="0 0 12 17" fill="none" ><path d="M3.6 3.5 L8.5 8.5 L3.6 13.5" stroke="#5c5c5c" stroke-width="1.15" stroke-linecap="round" stroke-linejoin="round"/></svg>
<svg style="position:absolute;left:773.5px;top:364px" width="12" height="17" viewBox="0 0 12 17" fill="none" ><path d="M3.6 3.5 L8.5 8.5 L3.6 13.5" stroke="#5c5c5c" stroke-width="1.15" stroke-linecap="round" stroke-linejoin="round"/></svg>
<svg style="position:absolute;left:773.5px;top:524px" width="12" height="17" viewBox="0 0 12 17" fill="none" ><path d="M3.6 3.5 L8.5 8.5 L3.6 13.5" stroke="#5c5c5c" stroke-width="1.15" stroke-linecap="round" stroke-linejoin="round"/></svg>
<svg style="position:absolute;left:773.5px;top:695px" width="12" height="17" viewBox="0 0 12 17" fill="none" ><path d="M3.6 3.5 L8.5 8.5 L3.6 13.5" stroke="#5c5c5c" stroke-width="1.15" stroke-linecap="round" stroke-linejoin="round"/></svg>
<svg style="position:absolute;left:366px;top:160px" width="24" height="24" viewBox="0 0 24 24" fill="none" ><defs><linearGradient id="of" x1="0" y1="0" x2="0" y2="1"><stop offset="0" stop-color="#ffd75e"/><stop offset="1" stop-color="#f6b623"/></linearGradient></defs><path d="M2 4 Q2 3 3 3 H8.4 Q9 3 9.4 3.5 L10.6 5 H21 Q22 5 22 6 V20.8 H2 Z" fill="#e0a00e"/><path d="M2 6.6 H9 L10.4 5.3 H21 Q22 5.3 22 6.3 V20.8 H2 Z" fill="url(#of)"/><path d="M4.8 20.8 V16.6 Q4.8 15.4 6 15.4 H17.6 Q18.8 15.4 18.8 16.6 V20.8 Z" fill="#1b86e2"/><path d="M6.6 18.3 H17.2" stroke="#0d5cab" stroke-width="1.3"/></svg>
<svg style="position:absolute;left:366px;top:200px" width="24" height="24" viewBox="0 0 24 24" fill="none" ><rect x="3.4" y="3.1" width="4.2" height="4.2" rx="1" stroke="#5c5c5c" stroke-width="1.15"/><rect x="3.4" y="9.700000000000001" width="4.2" height="4.2" rx="1" stroke="#5c5c5c" stroke-width="1.15"/><rect x="3.4" y="16.2" width="4.2" height="4.2" rx="1" stroke="#5c5c5c" stroke-width="1.15"/><path d="M10.6 5 H20.4" stroke="#5c5c5c" stroke-width="1.3" stroke-linecap="round" stroke-linejoin="round" /><path d="M10.4 11.4 H11.4" stroke="#5c5c5c" stroke-width="1.1" stroke-linecap="round" stroke-linejoin="round" /><circle cx="16.4" cy="16.4" r="5.6" fill="#1177d6"/><path d="M14.2 18.6 L18.5 14.3 M15.2 14.1 H18.7 V17.6" stroke="#fff" stroke-width="1.25" stroke-linecap="round" stroke-linejoin="round" /></svg>
<svg style="position:absolute;left:366px;top:240px" width="24" height="24" viewBox="0 0 24 24" fill="none" ><path d="M6 6.6 Q3.4 6.8 3.4 9.2 V17.6 Q3.4 20.4 6.2 20.4 H14.6 Q17.2 20.4 17.6 18" stroke="#5c5c5c" stroke-width="1.3" stroke-linecap="round" stroke-linejoin="round" /><rect x="6.4" y="3.3" width="14.5" height="14.1" rx="2.6" fill="#f6f6f6" stroke="#5c5c5c" stroke-width="1.3"/><path d="M9.8 14.1 L17 6.9 M11.6 6.7 H17.2 V12.3" stroke="#1177d6" stroke-width="1.35" stroke-linecap="round" stroke-linejoin="round" /></svg>
<svg style="position:absolute;left:366px;top:280px" width="24" height="24" viewBox="0 0 24 24" fill="none" ><path d="M12.2 5.2 H6.2 Q3.4 5.2 3.4 8 V17.6 Q3.4 20.4 6.2 20.4 H16.8 Q19.6 20.4 19.6 17.6 V13.6" stroke="#5c5c5c" stroke-width="1.3" stroke-linecap="round" stroke-linejoin="round" /><path d="M11.2 14.6 L20.8 5.0 M13.4 3.4 H20.9 V10.9" stroke="#1177d6" stroke-width="1.35" stroke-linecap="round" stroke-linejoin="round" /></svg>
<svg style="position:absolute;left:366px;top:320px" width="24" height="24" viewBox="0 0 24 24" fill="none" ><rect x="7.4" y="3.7" width="9.2" height="16.5" rx="2.2" stroke="#5c5c5c" stroke-width="1.3"/><path d="M10.4 17.4 H13.6" stroke="#5c5c5c" stroke-width="1.2" stroke-linecap="round" stroke-linejoin="round" /></svg>
<svg style="position:absolute;left:366px;top:360px" width="24" height="24" viewBox="0 0 24 24" fill="none" ><path d="M9.2 5 H6.2 Q3.4 5 3.4 7.8 V17.6 Q3.4 20.4 6.2 20.4 H16.6 Q19.4 20.4 19.4 17.6 V16.6" stroke="#5c5c5c" stroke-width="1.3" stroke-linecap="round" stroke-linejoin="round" /><path d="M16.2 3.8 L21.1 9.8 L16.2 15.6 V12.4 C12.4 12 9.6 13.2 7 15.4 C8.2 10.4 11.4 7.6 16.2 7.2 Z" stroke="#1177d6" stroke-width="1.3" stroke-linecap="round" stroke-linejoin="round" /></svg>
<svg style="position:absolute;left:366px;top:400px" width="24" height="24" viewBox="0 0 24 24" fill="none" ><path d="M11 20.2 H5 Q2.2 20.2 2.2 17.4 V6.4 Q2.2 3.6 5 3.6 H9 Q10.2 3.6 11 4.4 L12.8 6.2 H17.8 Q20.4 6.2 20.8 8.6" stroke="#5c5c5c" stroke-width="1.3" stroke-linecap="round" stroke-linejoin="round" /><path d="M5.4 20 Q5.2 17 5.8 11.6 Q6.2 8.6 9 8.6 H21" stroke="#5c5c5c" stroke-width="1.2" stroke-linecap="round" stroke-linejoin="round" /><circle cx="16.5" cy="16.4" r="5.6" fill="#1177d6"/><path d="M13.6 16.4 H19.2 M17 13.9 L19.5 16.4 L17 18.9" stroke="#fff" stroke-width="1.25" stroke-linecap="round" stroke-linejoin="round" /></svg>
<svg style="position:absolute;left:366px;top:440px" width="24" height="24" viewBox="0 0 24 24" fill="none" ><path d="M9.2 16.2 L2.6 21.6" stroke="#5c5c5c" stroke-width="1.3" stroke-linecap="round" stroke-linejoin="round" /><path d="M13.8 2.6 L21.4 10.6 L17.4 12.8 L15.6 17 Q14.6 19.6 12.8 20.2 L3.8 11.8 Q4.4 9.8 7 8.8 L11.4 7 Z" stroke="#1177d6" stroke-width="1.35" stroke-linecap="round" stroke-linejoin="round" /></svg>
<svg style="position:absolute;left:366px;top:480px" width="24" height="24" viewBox="0 0 24 24" fill="none" ><path d="M12.00 3.50 L14.41 9.58 L20.94 10.00 L15.90 14.17 L17.53 20.50 L12.00 17.00 L6.47 20.50 L8.10 14.17 L3.06 10.00 L9.59 9.58 Z" stroke="#1177d6" stroke-width="1.35" stroke-linecap="round" stroke-linejoin="round" /></svg>
<svg style="position:absolute;left:366px;top:520px" width="24" height="24" viewBox="0 0 24 24" fill="none" ><path d="M2.4 17.6 V6.2 Q2.4 3.4 5.2 3.4 H9.2 Q10.4 3.4 11.2 4.2 L13 6.2 H18.8 Q21.6 6.2 21.6 9 V17.6 Q21.6 20.4 18.8 20.4 H5.2 Q2.4 20.4 2.4 17.6 Z" stroke="#5c5c5c" stroke-width="1.3" stroke-linecap="round" stroke-linejoin="round" /><path d="M2.6 8.4 H9.4 Q10.4 8.4 11.2 7.6 L12.6 6.4" stroke="#5c5c5c" stroke-width="1.2" stroke-linecap="round" stroke-linejoin="round" /><path d="M16.5 8.6 V20 M16.5 11 L15 12.2 L17.6 13.6 L15 15 L17.6 16.4 L16.5 17.2" stroke="#1177d6" stroke-width="1.2" stroke-linecap="round" stroke-linejoin="round" /><circle cx="16.5" cy="7.3" r="1.3" stroke="#1177d6" stroke-width="1.1" fill="#fafafa"/></svg>
<svg style="position:absolute;left:366px;top:560px" width="24" height="24" viewBox="0 0 24 24" fill="none" ><rect x="2.4" y="4.6" width="19.2" height="14.8" rx="3.2" stroke="#5c5c5c" stroke-width="1.3"/><path d="M5.4 8.2 L8.6 16 M8.6 8.2 L11.8 16" stroke="#1177d6" stroke-width="1.3" stroke-linecap="round" stroke-linejoin="round" /><rect x="13.8" y="14.6" width="1.7" height="1.7" fill="#1177d6"/><rect x="16.8" y="14.6" width="1.7" height="1.7" fill="#1177d6"/></svg>
<svg style="position:absolute;left:366px;top:600px" width="24" height="24" viewBox="0 0 24 24" fill="none" ><path d="M20.9 6.6 L17.6 9.9 Q16.4 10.6 15.4 9.6 L14.5 8.7 Q13.6 7.6 14.4 6.5 L17.6 3.3 C14.6 2.2 11 4.4 11.2 8.2 Q11.3 9.3 10.6 10 L3.6 17.4 C1.4 19.8 4.6 22.8 6.9 20.6 L14.2 13.6 Q15 12.9 16 13 C19.8 13.4 22.2 9.8 20.9 6.6 Z" stroke="#5c5c5c" stroke-width="1.3" stroke-linecap="round" stroke-linejoin="round" /></svg>
<svg style="position:absolute;left:366px;top:652.1px" width="24" height="24" viewBox="0 0 24 24" fill="none" ><defs><linearGradient id="np" x1="0" y1="0" x2="0" y2="1"><stop offset="0" stop-color="#ffffff"/><stop offset=".42" stop-color="#e4f0e4"/><stop offset=".62" stop-color="#7fd648"/><stop offset="1" stop-color="#2c9c18"/></linearGradient></defs><path d="M2.6 1.5 H13.8 L17.6 5 V20.4 H2.6 Z" fill="url(#np)" stroke="#9aa0a0" stroke-width=".9"/><path d="M13.8 1.5 V5 H17.6 Z" fill="#d8dede" stroke="#9aa0a0" stroke-width=".7"/><path d="M6.4 7.6 Q6.4 6.4 7.4 6.4 Q8.4 6.4 8.4 7.6 V12.6 M6.4 7.6 V12.6" stroke="#222" stroke-width="1.1" fill="none"/><rect x="10" y="9" width="1.2" height="2.2" fill="#222"/><rect x="12.4" y="9.2" width="1.4" height="1.6" fill="#444"/><path d="M20.2 2.2 L21.6 3.2 L14.2 16.2 L12.6 17.2 L12.8 15.2 Z" fill="#f2a51a" stroke="#c47a12" stroke-width=".5"/><path d="M20.2 2.2 L21.6 3.2 L20.9 4.4 L19.5 3.4 Z" fill="#d8323c"/><path d="M12.6 17.2 L12.8 15.6 L13.9 16.4 Z" fill="#5a4a3a"/></svg>
<svg style="position:absolute;left:366px;top:742px" width="24" height="24" viewBox="0 0 24 24" fill="none" ><path d="M8.6 1.3 H6.2 Q3.4 1.3 3.4 4.1 V14 Q3.4 16.8 6.2 16.8 H17.6 Q20.4 16.8 20.4 14 V10.8" stroke="#5c5c5c" stroke-width="1.3" stroke-linecap="round" stroke-linejoin="round" transform="translate(0,3.4)"/><path d="M3.6 13.4 H8.2 Q11.8 13.4 11.8 17 V20" stroke="#5c5c5c" stroke-width="1.2" stroke-linecap="round" stroke-linejoin="round" /><path d="M13.4 11 L20.4 4.2 M13.6 4 H20.6 V11" stroke="#1177d6" stroke-width="1.5" stroke-linecap="round" stroke-linejoin="round" /></svg>
<svg style="position:absolute;left:368px;top:694px" width="20" height="18" viewBox="0 0 20 18" fill="none" ><rect x="0" y="0" width="20" height="6.2" rx=".8" fill="url(#wr1)"/><rect x="0" y="6" width="20" height="6.2" rx=".5" fill="url(#wr2)"/><rect x="0" y="12" width="20" height="6" rx=".8" fill="url(#wr3)"/><rect x="2" y="1.2" width="1.1" height="3.6" fill="#f4c430"/><rect x="2" y="7.2" width="1.1" height="3.6" fill="#f4c430"/><rect x="2" y="13.2" width="1.1" height="3.6" fill="#f4c430"/><rect x="6.9" y="0" width="6.4" height="18" fill="url(#wrb)"/><rect x="6.9" y="12.2" width="6.4" height="5.8" fill="#b85c10" opacity=".55"/><path d="M6.9 0 H13.3 V1.8 H6.9 Z" fill="#f7cf3c"/><path d="M7.6 7 V5 Q7.6 1.6 10.1 1.6 Q12.6 1.6 12.6 5 V7 Z" fill="#f6b52e" stroke="#d9861a" stroke-width=".5"/><path d="M9 6.6 V5 Q9 3.6 10.1 3.6 Q11.2 3.6 11.2 5 V6.6 Z" fill="#e8891c"/><rect x="5.9" y="6.7" width="8.4" height="5.4" rx="1.5" fill="#f6f6f6" stroke="#c9c9c9" stroke-width=".5"/><rect x="9.2" y="8" width="1.8" height="4" rx=".6" fill="#8c8c94"/></svg>
<span class="t" id="t20" style="left:379.0px;top:121.0px;font-size:15.5px;color:#1f1f1f;transform:scaleX(0.9782)">Cut</span>
<span class="t" id="t21" style="left:448.1px;top:121.0px;font-size:15.5px;color:#1f1f1f;transform:scaleX(0.9699)">Copy</span>
<span class="t" id="t22" style="left:523.0px;top:121.0px;font-size:15.5px;color:#1f1f1f;transform:scaleX(0.8905)">Paste</span>
<span class="t" id="t23" style="left:588.7px;top:121.0px;font-size:15.5px;color:#1f1f1f;transform:scaleX(0.9062)">Rename</span>
<span class="t" id="t24" style="left:672.2px;top:121.0px;font-size:15.5px;color:#1f1f1f;transform:scaleX(0.9063)">Share</span>
<span class="t" id="t25" style="left:744.4px;top:121.0px;font-size:15.5px;color:#1f1f1f;transform:scaleX(0.9529)">Delete</span>
<span class="t" id="t26" style="left:402.2px;top:165.0px;font-size:17.9px;color:#252525;transform:scaleX(0.9707)">Open</span>
<span class="t" id="t27" style="left:402.2px;top:205.0px;font-size:17.9px;color:#252525;transform:scaleX(0.9930)">Open with</span>
<span class="t" id="t28" style="left:402.2px;top:245.0px;font-size:17.9px;color:#252525;transform:scaleX(0.9824)">Open in new tab</span>
<span class="t" id="t29" style="left:402.2px;top:285.0px;font-size:17.9px;color:#252525;transform:scaleX(0.9897)">Open in new window</span>
<span class="t" id="t30" style="left:402.2px;top:325.0px;font-size:17.9px;color:#252525;transform:scaleX(0.9694)">Send to My Phone</span>
<span class="t" id="t31" style="left:402.2px;top:365.0px;font-size:17.9px;color:#252525;transform:scaleX(0.9570)">Share with</span>
<span class="t" id="t32" style="left:402.2px;top:405.0px;font-size:17.9px;color:#252525;transform:scaleX(0.9306)">Extract All...</span>
<span class="t" id="t33" style="left:402.2px;top:445.0px;font-size:17.9px;color:#252525;transform:scaleX(0.9648)">Pin to Start</span>
<span class="t" id="t34" style="left:402.2px;top:485.0px;font-size:17.9px;color:#252525;transform:scaleX(0.9664)">Add to Favorites</span>
<span class="t" id="t35" style="left:402.2px;top:525.0px;font-size:17.9px;color:#252525;transform:scaleX(0.9344)">Compress to...</span>
<span class="t" id="t36" style="left:402.2px;top:565.0px;font-size:17.9px;color:#252525;transform:scaleX(0.9560)">Copy as path</span>
<span class="t" id="t37" style="left:402.2px;top:605.0px;font-size:17.9px;color:#252525;transform:scaleX(0.9663)">Properties</span>
<span class="t" id="t38" style="left:402.2px;top:656.0px;font-size:17.9px;color:#252525;transform:scaleX(1.0073)">Edit with Notepad++</span>
<span class="t" id="t39" style="left:402.2px;top:696.0px;font-size:17.9px;color:#252525;transform:scaleX(0.9214)">WinRAR</span>
<span class="t" id="t40" style="left:402.2px;top:747.0px;font-size:17.9px;color:#252525;transform:scaleX(0.9833)">Show more options</span>
<span class="t" id="t41" style="left:704.3px;top:166.0px;font-size:15.5px;color:#636363;transform:scaleX(0.9282)">Enter</span>
<span class="t" id="t42" style="left:704.3px;top:566.0px;font-size:15.5px;color:#636363;transform:scaleX(0.9843)">Ctrl+Shift+C</span>
<span class="t" id="t43" style="left:704.3px;top:606.0px;font-size:15.5px;color:#636363;transform:scaleX(0.9862)">Alt+Enter</span>
</div>
<div id="sub" class="abs"></div>
<div class="layer gs" id="L2">
<div id="herehl" class="abs"></div>
<svg style="position:absolute;left:817px;top:697px" width="20" height="18" viewBox="0 0 20 18" fill="none" ><rect x="0" y="0" width="20" height="6.2" rx=".8" fill="url(#wr1)"/><rect x="0" y="6" width="20" height="6.2" rx=".5" fill="url(#wr2)"/><rect x="0" y="12" width="20" height="6" rx=".8" fill="url(#wr3)"/><rect x="2" y="1.2" width="1.1" height="3.6" fill="#f4c430"/><rect x="2" y="7.2" width="1.1" height="3.6" fill="#f4c430"/><rect x="2" y="13.2" width="1.1" height="3.6" fill="#f4c430"/><rect x="6.9" y="0" width="6.4" height="18" fill="url(#wrb)"/><rect x="6.9" y="12.2" width="6.4" height="5.8" fill="#b85c10" opacity=".55"/><path d="M6.9 0 H13.3 V1.8 H6.9 Z" fill="#f7cf3c"/><path d="M7.6 7 V5 Q7.6 1.6 10.1 1.6 Q12.6 1.6 12.6 5 V7 Z" fill="#f6b52e" stroke="#d9861a" stroke-width=".5"/><path d="M9 6.6 V5 Q9 3.6 10.1 3.6 Q11.2 3.6 11.2 5 V6.6 Z" fill="#e8891c"/><rect x="5.9" y="6.7" width="8.4" height="5.4" rx="1.5" fill="#f6f6f6" stroke="#c9c9c9" stroke-width=".5"/><rect x="9.2" y="8" width="1.8" height="4" rx=".6" fill="#8c8c94"/></svg>
<svg style="position:absolute;left:817px;top:737px" width="20" height="18" viewBox="0 0 20 18" fill="none" ><rect x="0" y="0" width="20" height="6.2" rx=".8" fill="url(#wr1)"/><rect x="0" y="6" width="20" height="6.2" rx=".5" fill="url(#wr2)"/><rect x="0" y="12" width="20" height="6" rx=".8" fill="url(#wr3)"/><rect x="2" y="1.2" width="1.1" height="3.6" fill="#f4c430"/><rect x="2" y="7.2" width="1.1" height="3.6" fill="#f4c430"/><rect x="2" y="13.2" width="1.1" height="3.6" fill="#f4c430"/><rect x="6.9" y="0" width="6.4" height="18" fill="url(#wrb)"/><rect x="6.9" y="12.2" width="6.4" height="5.8" fill="#b85c10" opacity=".55"/><path d="M6.9 0 H13.3 V1.8 H6.9 Z" fill="#f7cf3c"/><path d="M7.6 7 V5 Q7.6 1.6 10.1 1.6 Q12.6 1.6 12.6 5 V7 Z" fill="#f6b52e" stroke="#d9861a" stroke-width=".5"/><path d="M9 6.6 V5 Q9 3.6 10.1 3.6 Q11.2 3.6 11.2 5 V6.6 Z" fill="#e8891c"/><rect x="5.9" y="6.7" width="8.4" height="5.4" rx="1.5" fill="#f6f6f6" stroke="#c9c9c9" stroke-width=".5"/><rect x="9.2" y="8" width="1.8" height="4" rx=".6" fill="#8c8c94"/></svg>
<svg style="position:absolute;left:817px;top:777px" width="20" height="18" viewBox="0 0 20 18" fill="none" ><rect x="0" y="0" width="20" height="6.2" rx=".8" fill="url(#wr1)"/><rect x="0" y="6" width="20" height="6.2" rx=".5" fill="url(#wr2)"/><rect x="0" y="12" width="20" height="6" rx=".8" fill="url(#wr3)"/><rect x="2" y="1.2" width="1.1" height="3.6" fill="#f4c430"/><rect x="2" y="7.2" width="1.1" height="3.6" fill="#f4c430"/><rect x="2" y="13.2" width="1.1" height="3.6" fill="#f4c430"/><rect x="6.9" y="0" width="6.4" height="18" fill="url(#wrb)"/><rect x="6.9" y="12.2" width="6.4" height="5.8" fill="#b85c10" opacity=".55"/><path d="M6.9 0 H13.3 V1.8 H6.9 Z" fill="#f7cf3c"/><path d="M7.6 7 V5 Q7.6 1.6 10.1 1.6 Q12.6 1.6 12.6 5 V7 Z" fill="#f6b52e" stroke="#d9861a" stroke-width=".5"/><path d="M9 6.6 V5 Q9 3.6 10.1 3.6 Q11.2 3.6 11.2 5 V6.6 Z" fill="#e8891c"/><rect x="5.9" y="6.7" width="8.4" height="5.4" rx="1.5" fill="#f6f6f6" stroke="#c9c9c9" stroke-width=".5"/><rect x="9.2" y="8" width="1.8" height="4" rx=".6" fill="#8c8c94"/></svg>
<svg style="position:absolute;left:817px;top:817px" width="20" height="18" viewBox="0 0 20 18" fill="none" ><rect x="0" y="0" width="20" height="6.2" rx=".8" fill="url(#wr1)"/><rect x="0" y="6" width="20" height="6.2" rx=".5" fill="url(#wr2)"/><rect x="0" y="12" width="20" height="6" rx=".8" fill="url(#wr3)"/><rect x="2" y="1.2" width="1.1" height="3.6" fill="#f4c430"/><rect x="2" y="7.2" width="1.1" height="3.6" fill="#f4c430"/><rect x="2" y="13.2" width="1.1" height="3.6" fill="#f4c430"/><rect x="6.9" y="0" width="6.4" height="18" fill="url(#wrb)"/><rect x="6.9" y="12.2" width="6.4" height="5.8" fill="#b85c10" opacity=".55"/><path d="M6.9 0 H13.3 V1.8 H6.9 Z" fill="#f7cf3c"/><path d="M7.6 7 V5 Q7.6 1.6 10.1 1.6 Q12.6 1.6 12.6 5 V7 Z" fill="#f6b52e" stroke="#d9861a" stroke-width=".5"/><path d="M9 6.6 V5 Q9 3.6 10.1 3.6 Q11.2 3.6 11.2 5 V6.6 Z" fill="#e8891c"/><rect x="5.9" y="6.7" width="8.4" height="5.4" rx="1.5" fill="#f6f6f6" stroke="#c9c9c9" stroke-width=".5"/><rect x="9.2" y="8" width="1.8" height="4" rx=".6" fill="#8c8c94"/></svg>
<span class="t" id="t44" style="left:852.2px;top:700.0px;font-size:17.9px;color:#252525;transform:scaleX(0.9604)">Open with WinRAR</span>
<span class="t" id="t45" style="left:852.2px;top:740.0px;font-size:17.9px;color:#252525;transform:scaleX(0.9183)">Extract files...</span>
<span class="t" id="t46" style="left:852.2px;top:780.0px;font-size:17.9px;color:#252525;transform:scaleX(0.9767)">Extract to &quot;Kingcontent Extension\&quot;</span>
<span class="t" id="t47" style="left:852.2px;top:820.0px;font-size:17.9px;color:#252525;transform:scaleX(0.9394)">Extract Here</span>
<div id="redbox" class="abs"></div>
</div>
</body></html>
